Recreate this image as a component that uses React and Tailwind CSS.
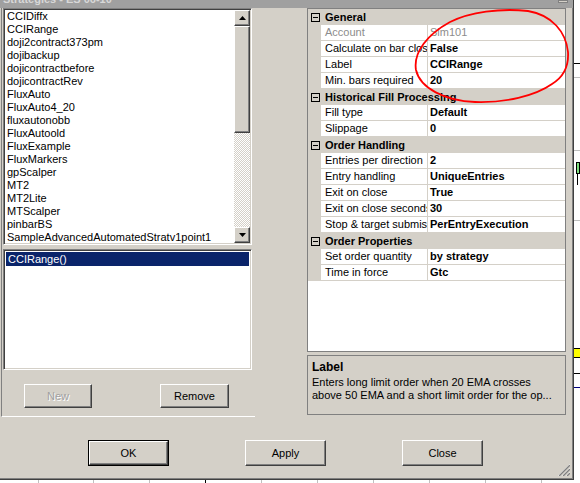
import React from "react";

const strategies = [
  "CCIDiffx",
  "CCIRange",
  "doji2contract373pm",
  "dojibackup",
  "dojicontractbefore",
  "dojicontractRev",
  "FluxAuto",
  "FluxAuto4_20",
  "fluxautonobb",
  "FluxAutoold",
  "FluxExample",
  "FluxMarkers",
  "gpScalper",
  "MT2",
  "MT2Lite",
  "MTScalper",
  "pinbarBS",
  "SampleAdvancedAutomatedStratv1point1",
];

const groups = [
  {
    name: "General",
    rows: [
      { label: "Account", value: "Sim101", disabled: true },
      { label: "Calculate on bar close", value: "False" },
      { label: "Label", value: "CCIRange" },
      { label: "Min. bars required", value: "20" },
    ],
  },
  {
    name: "Historical Fill Processing",
    rows: [
      { label: "Fill type", value: "Default" },
      { label: "Slippage", value: "0" },
    ],
  },
  {
    name: "Order Handling",
    rows: [
      { label: "Entries per direction", value: "2" },
      { label: "Entry handling", value: "UniqueEntries" },
      { label: "Exit on close", value: "True" },
      { label: "Exit on close seconds", value: "30" },
      { label: "Stop & target submission", value: "PerEntryExecution" },
    ],
  },
  {
    name: "Order Properties",
    rows: [
      { label: "Set order quantity", value: "by strategy" },
      { label: "Time in force", value: "Gtc" },
    ],
  },
];

// classic raised 3d button
const raised =
  "border border-t-white border-l-white border-r-[#404040] border-b-[#404040] shadow-[inset_-1px_-1px_#808080] bg-[#d4d0c8]";
const sunken =
  "border border-t-[#808080] border-l-[#808080] border-r-white border-b-white shadow-[inset_1px_1px_#404040,inset_-1px_-1px_#d4d0c8]";

function Arrow({ down }) {
  return (
    <svg width="7" height="4" viewBox="0 0 7 4">
      <polygon points={down ? "0,0 7,0 3.5,4" : "0,4 7,4 3.5,0"} fill="#000" />
    </svg>
  );
}

function Minus() {
  return (
    <div className="w-[9px] h-[9px] border border-black bg-[#d4d0c8] flex items-center justify-center">
      <div className="w-[5px] h-px bg-black" />
    </div>
  );
}

function PropertyGrid() {
  return (
    <div className="w-[259px] h-[344px] border border-[#808080] bg-white flex flex-col">
      {groups.map((g) => (
        <div key={g.name} className="flex flex-col">
          <div className="h-[16px] bg-[#d4d0c8] flex items-center">
            <div className="w-[13px] flex justify-center pl-[1px]">
              <Minus />
            </div>
            <span className="pl-[4px] font-bold text-[11px] leading-[16px] whitespace-nowrap">{g.name}</span>
          </div>
          {g.rows.map((r) => (
            <div key={r.label} className="h-[16px] flex">
              <div className="w-[13px] bg-[#d4d0c8]" />
              <div
                className={`w-[107px] border-r border-b border-[#d4d0c8] pl-[4px] leading-[15px] overflow-hidden whitespace-nowrap ${
                  r.disabled ? "text-[#8c8c8c]" : "text-black"
                }`}
              >
                {r.label}
              </div>
              <div
                className={`flex-1 border-b border-[#d4d0c8] pl-[2px] leading-[15px] whitespace-nowrap overflow-hidden ${
                  r.disabled ? "text-[#8c8c8c]" : "font-bold text-black"
                }`}
              >
                {r.value}
              </div>
            </div>
          ))}
        </div>
      ))}
    </div>
  );
}

function Btn({ children, className = "", disabled }) {
  return (
    <div className={`${raised} flex items-center justify-center ${className}`}>
      <span className={disabled ? "text-[#a0a0a0] [text-shadow:1px_1px_#fff]" : "text-black"}>{children}</span>
    </div>
  );
}

export default function App() {
  return (
    <div className="relative w-[580px] h-[483px] overflow-hidden bg-white font-['Liberation_Sans',Arial,sans-serif] text-[11px] text-black">
      {/* chart behind the dialog */}
      <div className="absolute left-[574px] top-[63px] w-[6px] h-px bg-black" />
      <div className="absolute left-[574px] top-[77px] w-[6px] h-px bg-[#c0c0c0]" />
      <div className="absolute left-[574px] top-[150px] w-[6px] h-px bg-[#c0c0c0]" />
      <div className="absolute left-[576px] top-[162px] w-[4px] h-[12px] bg-[#7ee07e] border border-black" />
      <div className="absolute left-[577px] top-[174px] w-px h-[11px] bg-black" />
      <div className="absolute left-[574px] top-[220px] w-[6px] h-px bg-[#c0c0c0]" />
      <div className="absolute left-[574px] top-[348px] w-[6px] h-[10px] bg-[#ffff00] border-y border-black" />
      <div className="absolute left-[574px] top-[373px] w-[6px] h-px bg-black" />
      <div className="absolute left-[574px] top-[387px] w-[6px] h-px bg-[#000080]" />
      <div className="absolute left-0 top-[480px] w-[580px]">
        {[38, 93, 149, 205, 261, 317, 373, 429, 485, 541].map((x, i) => (
          <div key={x} className={`absolute top-0 w-px h-[3px] ${i === 3 ? "bg-black" : "bg-[#c0c0c0]"}`} style={{ left: x }} />
        ))}
      </div>

      {/* dialog */}
      <div className="relative w-[574px] h-[480px] bg-[#d4d0c8] border-r border-b border-[#404040] shadow-[inset_-1px_-1px_#808080] flex flex-col">
        <div className="h-[8px] bg-[#a0a0a0] overflow-hidden flex">
          <span className="-mt-[7px] ml-[3px] font-bold text-[11px] leading-[12px] text-[#d8d8d8] whitespace-nowrap">
            Strategies - ES 06-10
          </span>
          <div className="ml-auto mr-[5px] w-[10px] h-[3px] border border-[#808080] bg-[#d4d0c8]" />
        </div>

        <div className="flex h-[409px]">
          {/* left panel */}
          <div className="w-[254px] ml-[1px] border-l border-l-[#808080] border-b border-b-white flex flex-col">
            <div className={`ml-[1px] w-[249px] h-[237px] bg-white flex ${sunken} p-[1px]`}>
              <div className="flex-1 flex flex-col pl-[2px] leading-[13px] overflow-hidden">
                {strategies.map((s) => (
                  <div key={s} className="h-[13px] whitespace-nowrap">
                    {s}
                  </div>
                ))}
              </div>
              <div className="w-[16px] flex flex-col">
                <div className={`h-[16px] ${raised} flex items-center justify-center`}>
                  <Arrow />
                </div>
                <div className={`h-[107px] ${raised}`} />
                <div className="flex-1 bg-[repeating-conic-gradient(#ffffff_0_25%,#d4d0c8_0_50%)] bg-[length:2px_2px]" />
                <div className={`h-[16px] ${raised} flex items-center justify-center`}>
                  <Arrow down />
                </div>
              </div>
            </div>

            <div className={`ml-[1px] mt-[4px] w-[249px] h-[121px] bg-white ${sunken} p-[2px]`}>
              <div className="h-[14px] bg-[#0a246a] text-white pl-[2px] leading-[14px]">CCIRange()</div>
            </div>

            <div className="flex mt-[14px]">
              <Btn disabled className="ml-[22px] w-[68px] h-[24px]">
                New
              </Btn>
              <Btn className="ml-[68px] w-[69px] h-[24px]">Remove</Btn>
            </div>
          </div>

          {/* right panel */}
          <div className="ml-[52px] flex flex-col">
            <PropertyGrid />
            <div className="mt-[3px] w-[259px] h-[60px] border border-[#808080] px-[4px] pt-[4px] leading-[13px]">
              <div className="font-bold text-[12px] leading-[14px]">Label</div>
              <div className="text-[11px] mt-[2px]">
                Enters long limit order when 20 EMA crosses
                <br />
                above 50 EMA and a short limit order for the op...
              </div>
            </div>
          </div>
        </div>

        <div className="flex mt-[23px]">
          <div className="ml-[88px] w-[81px] h-[26px] border border-black">
            <Btn className="w-full h-full">OK</Btn>
          </div>
          <Btn className="ml-[76px] w-[81px] h-[26px]">Apply</Btn>
          <Btn className="ml-[76px] w-[81px] h-[26px]">Close</Btn>
        </div>

        {/* size grip */}
        <svg className="absolute right-[3px] bottom-[3px]" width="13" height="13" viewBox="0 0 13 13">
          {[0, 4, 8].map((o) => (
            <g key={o}>
              <line x1={13} y1={1 + o} x2={1 + o} y2={13} stroke="#ffffff" strokeWidth="1" />
              <line x1={13} y1={2 + o} x2={2 + o} y2={13} stroke="#808080" strokeWidth="1.4" />
            </g>
          ))}
        </svg>
      </div>

      {/* red hand-drawn annotation */}
      <svg className="absolute left-0 top-0 pointer-events-none" width="580" height="483" viewBox="0 0 580 483">
        <path
          d="M450 22 C 470 12, 500 8, 528 11 C 552 15, 566 32, 568 52 C 569 68, 562 78, 552 84 C 535 96, 505 103, 475 102 C 445 101, 420 88, 416 70 C 413 52, 428 34, 450 22"
          fill="none"
          stroke="#ff0000"
          strokeWidth="1.8"
        />
      </svg>
    </div>
  );
}
